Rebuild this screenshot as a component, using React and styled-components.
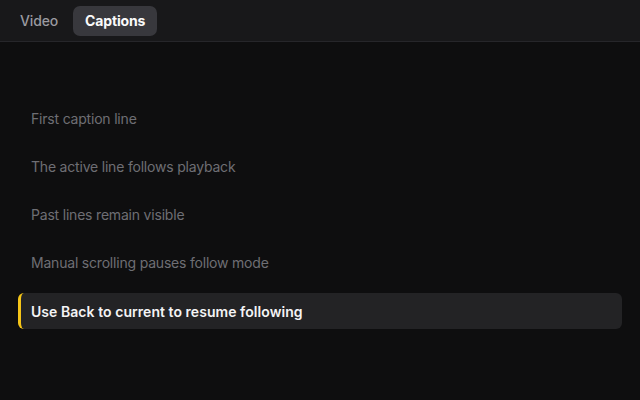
import React from "react";
import styled, { createGlobalStyle } from "styled-components";

const GlobalStyle = createGlobalStyle`
  html, body {
    margin: 0;
    padding: 0;
    background: #0e0e0f;
    font-family: Inter, "Noto Sans", sans-serif;
  }
`;

const Page = styled.div`
  width: 640px;
  height: 400px;
  display: flex;
  flex-direction: column;
  background: #0e0e0f;
  overflow: hidden;
`;

const TabBar = styled.div`
  height: 42px;
  display: flex;
  align-items: center;
  gap: 3px;
  padding: 0 8px;
  background: #18181a;
  border-bottom: 1px solid #26262a;
  box-sizing: border-box;
`;

const Tab = styled.button`
  height: 30px;
  padding: 0 12px;
  border: none;
  border-radius: 7px;
  font-family: inherit;
  font-size: 14px;
  font-weight: ${(p) => (p.$active ? 700 : 500)};
  letter-spacing: -0.15px;
  color: ${(p) => (p.$active ? "#fafafa" : "#9a9aa0")};
  background: ${(p) => (p.$active ? "#38383d" : "transparent")};
  cursor: pointer;
`;

const CaptionList = styled.div`
  display: flex;
  flex-direction: column;
  gap: 12.25px;
  padding: 58px 18px 0;
`;

const Caption = styled.div`
  height: 36px;
  display: flex;
  align-items: center;
  padding: 0 10px;
  border-left: 3px solid ${(p) => (p.$active ? "#f5c518" : "transparent")};
  border-radius: 6px;
  background: ${(p) => (p.$active ? "#232325" : "transparent")};
  font-size: 14px;
  font-weight: ${(p) => (p.$active ? 600 : 400)};
  letter-spacing: ${(p) => (p.$active ? "0.05px" : "-0.2px")};
  color: ${(p) => (p.$active ? "#f4f4f5" : "#6e6e74")};
`;

const lines = [
  "First caption line",
  "The active line follows playback",
  "Past lines remain visible",
  "Manual scrolling pauses follow mode",
  "Use Back to current to resume following",
];

export default function App() {
  return (
    <>
      <GlobalStyle />
      <Page>
        <TabBar>
          <Tab>Video</Tab>
          <Tab $active>Captions</Tab>
        </TabBar>
        <CaptionList>
          {lines.map((line, i) => (
            <Caption key={line} $active={i === lines.length - 1}>
              {line}
            </Caption>
          ))}
        </CaptionList>
      </Page>
    </>
  );
}
